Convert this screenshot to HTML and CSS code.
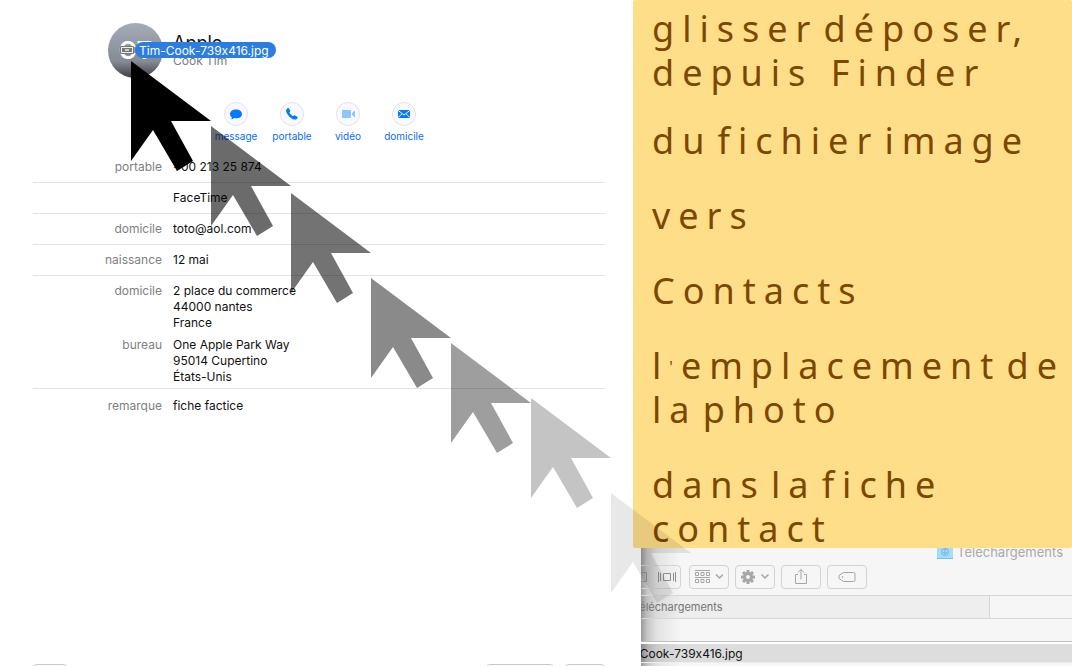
FILE: index.html
```
<!DOCTYPE html>
<html lang="fr">
<head>
    <meta charset="UTF-8">
    <meta name="viewport" content="width=device-width, initial-scale=1.0">
    <title>Contacts</title>
    <link rel="stylesheet" href="styles.css">
</head>
<body>
    <div class="desktop">
        <main class="contacts">
            <header class="card-header">
                <div class="avatar">CT</div>
                <div class="identity">
                    <h1>Apple</h1>
                    <p>Cook Tim</p>
                </div>
            </header>
            <nav class="actions">
                <a href="#message">
                    <svg viewBox="0 0 24 24"><circle cx="12" cy="12" r="11.5"/><path d="M12 7.500c3.500 0 6 1.900 6 4.400s-2.500 4.400-6 4.400c-.7 0-1.300-.1-1.900-.2-.9.800-2 1.200-3 1.200.6-.6.8-1.300.8-2C6.700 14.500 6 13.300 6 11.900c0-2.500 2.500-4.400 6-4.400z"/></svg>
                    message
                </a>
                <a href="#portable">
                    <svg viewBox="0 0 24 24"><circle cx="12" cy="12" r="11.5"/><path d="M7.300 6.400c.5-.5 1.200-.5 1.600.1l1.300 1.900c.3.500.2 1-.2 1.400l-.6.7c.9 1.600 2.100 2.800 3.700 3.700l.8-.7c.4-.3.900-.4 1.300-.1l2 1.400c.6.400.6 1.100.1 1.600-1.100 1.200-2.300 1.600-4.200.8-3-1.300-5.300-3.600-6.600-6.600-.8-1.900-.4-3.100.8-4.200z"/></svg>
                    portable
                </a>
                <a href="#video" class="off">
                    <svg viewBox="0 0 24 24"><circle cx="12" cy="12" r="11.5"/><path d="M6.500 8h7.500q1 0 1 1v6q0 1-1 1H6.500q-.5 0-.5-1V9q0-1 .5-1zM16 11l3-2.500v7L16 13z"/></svg>
                    vidéo
                </a>
                <a href="#domicile">
                    <svg viewBox="0 0 24 24"><circle cx="12" cy="12" r="11.5"/><path d="M6 8h12v8H6z"/><path class="fold" d="M6 8.300l6 4.700 6-4.700M6 15.700l4-4M18 15.700l-4-4"/></svg>
                    domicile
                </a>
            </nav>
            <dl class="fields">
                <div class="row"><dt>portable</dt><dd>+00 213 25 874</dd></div>
                <div class="row"><dt></dt><dd>FaceTime</dd></div>
                <div class="row"><dt>domicile</dt><dd>toto@aol.com</dd></div>
                <div class="row"><dt>naissance</dt><dd>12 mai</dd></div>
                <div class="row address"><dt>domicile</dt><dd>2 place du commerce<br>44000 nantes<br>France</dd></div>
                <div class="row address-end"><dt>bureau</dt><dd>One Apple Park Way<br>95014 Cupertino<br>États-Unis</dd></div>
                <div class="row remark"><dt>remarque</dt><dd>fiche factice</dd></div>
            </dl>
            <footer class="card-footer">
                <button class="add" aria-label="Ajouter"></button>
                <button class="edit" aria-label="Modifier"></button>
                <button class="share" aria-label="Partager"></button>
            </footer>
        </main>

        <aside class="side">
            <section class="note">
                <p>glisser<span class="gap"> </span>déposer,<br>depuis Finder</p>
                <p>du<span class="gap"> </span>fichier<span class="gap"> </span>image</p>
                <p>vers</p>
                <p>Contacts</p>
                <p>l<span class="apostrophe">'</span>emplacement<span class="gap"> </span>de<br>la<span class="gap"> </span>photo</p>
                <p>dans<span class="gap"> </span>la<span class="gap"> </span>fiche<br>contact</p>
            </section>

            <section class="finder">
                <h2 class="finder-title">
                    <svg viewBox="0 0 16 14"><path class="folder" d="M0 0h16v14H0z"/><path class="edge" d="M0 13h16v1H0z"/><circle cx="8" cy="7" r="3.5"/><path class="arrow" d="M8 4v5M6 7l2 2 2-2"/></svg>
                    Téléchargements
                </h2>
                <div class="toolbar">
                    <div class="views">
                        <button class="columns" aria-label="Colonnes"><svg viewBox="0 0 8 12"><path d="M-4 1.500H5.500v9H-4"/></svg></button>
                        <button class="flow" aria-label="Cover Flow"><svg viewBox="0 0 20 12"><path d="M1.500 1v10M3.500 2v8M6.500 2.500h7v7h-7zM16.500 2v8M18.500 1v10"/></svg></button>
                    </div>
                    <button aria-label="Grouper">
                        <svg class="group" viewBox="0 0 28 14"><path d="M0 .5h15M0 7.500h15M.5 2.500h3v3h-3zM6 2.500h3v3H6zM11.500 2.500h3v3h-3zM.5 9.500h3v3h-3zM6 9.500h3v3H6zM11.500 9.500h3v3h-3z"/><path class="chevron" d="M21 4.500l3.500 3.500L28 4.500"/></svg>
                    </button>
                    <button aria-label="Actions">
                        <svg class="group" viewBox="0 0 28 14"><circle class="gear" cx="7" cy="7" r="3.500"/><path class="teeth" d="M7 0v3M7 11v3M0 7h3M11 7h3M2.050 2.050l2.100 2.100M9.850 9.850l2.100 2.100M2.050 11.950l2.100-2.100M9.850 4.150l2.100-2.100"/><path class="chevron" d="M20.500 4.500L24 8l3.500-3.500"/></svg>
                    </button>
                    <button aria-label="Partager">
                        <svg class="icon" viewBox="0 0 18 18"><path d="M6 6.500H3.500v9h11v-9H12M9 11.500v-10M6 4.500l3-3 3 3"/></svg>
                    </button>
                    <button aria-label="Tags">
                        <svg class="icon" viewBox="0 0 18 18"><path d="M5.500 4.500h10q1.500 0 1.500 1.500v6q0 1.500-1.500 1.500h-10L1 10.500v-3z"/><circle cx="4.500" cy="9" r=".5"/></svg>
                    </button>
                </div>
                <div class="tabs">
                    <a href="#telechargements" class="tab">Téléchargements</a>
                </div>
                <div class="list-head"></div>
                <div class="file"><span>Tim-Cook-739x416.jpg</span></div>
            </section>
        </aside>

        <div class="drag-label">
            <svg viewBox="0 0 14 10"><path class="frame" d="M.5 1.500h13v7H.5z"/><path class="photo" d="M2 3h10v4H2z"/><path class="face" d="M5 4h4v2H5z"/></svg>
            <span>Tim-Cook-739x416.jpg</span>
        </div>

        <svg class="trail" width="700" height="666" viewBox="0 0 700 666">
            <defs>
                <path id="arrow" d="M0 0l80 60H40l22 40-16 10-24-41L0 100z"/>
            </defs>
            <use href="#arrow" x="131" y="61"/>
            <use href="#arrow" x="211" y="126" opacity=".58"/>
            <use href="#arrow" x="291" y="193" opacity=".55"/>
            <use href="#arrow" x="371" y="278" opacity=".46"/>
            <use href="#arrow" x="451" y="343" opacity=".38"/>
            <use href="#arrow" x="531" y="398" opacity=".23"/>
            <use href="#arrow" x="611" y="493" opacity=".09"/>
        </svg>
    </div>
</body>
</html>
```
FILE: styles.css
```
* {
    margin: 0;
    padding: 0;
    box-sizing: border-box;
}
body {
    font-family: Inter, "Liberation Sans", sans-serif;
    font-size: 12px;
    line-height: 16px;
    font-variant-ligatures: no-contextual;
    color: #111;
    background-color: #fff;
}
a {
    text-decoration: none;
}
.desktop {
    position: relative;
    display: flex;
    min-height: 100vh;
    overflow: hidden;
}

/* contact card */
.contacts {
    flex: 1;
    display: flex;
    flex-direction: column;
    padding: 23px 36px 0 33px;
    background-color: #fff;
}
.card-header {
    display: flex;
    align-items: center;
    gap: 10px;
    padding-left: 75px;
}
.avatar {
    width: 55px;
    height: 55px;
    border-radius: 50%;
    background: linear-gradient(#a5abb8 0%, #868a94 70%, #3c3d42 100%);
    color: #fff;
    font-size: 24px;
    font-weight: 600;
    line-height: 55px;
    text-align: center;
}
.identity h1 {
    font-size: 18px;
    font-weight: 400;
    line-height: 20px;
}
.identity p {
    color: #7c7c7c;
}
.actions {
    display: flex;
    padding: 24px 0 0 175px;
}
.actions a {
    width: 56px;
    display: flex;
    flex-direction: column;
    align-items: center;
    gap: 2px;
    font-size: 10px;
    color: #0a6cff;
}
.actions svg {
    width: 24px;
    height: 24px;
    fill: #007aff;
}
.actions circle {
    fill: #f9f9ff;
    stroke: #e2e2ea;
}
.actions .fold {
    fill: none;
    stroke: #f9f9ff;
}
.actions .off svg {
    fill: #8cc6ff;
}
.fields {
    padding-top: 8px;
}
.row {
    display: grid;
    grid-template-columns: 129px 1fr;
    column-gap: 11px;
    padding: 7px 0;
    border-bottom: 1px solid #e3e3e3;
}
.row dt {
    color: #808080;
    text-align: right;
}
.row.address {
    padding-bottom: 6px;
    border-bottom: 0;
}
.row.address-end {
    padding: 0 0 3px;
}
.row.remark {
    padding-top: 9px;
    border-bottom: 0;
}
.card-footer {
    display: flex;
    height: 2px;
    margin-top: auto;
    overflow: hidden;
}
.card-footer button {
    height: 22px;
    border: 1px solid #c8c8c8;
    border-radius: 4px;
    background-color: #fff;
}
.card-footer .add {
    width: 34px;
    margin-right: auto;
}
.card-footer .edit {
    width: 68px;
    margin-right: 11px;
}
.card-footer .share {
    width: 40px;
}

/* right side */
.side {
    width: 431px;
    display: flex;
    flex-direction: column;
}
.note {
    position: relative;
    z-index: 1;
    display: flex;
    flex-direction: column;
    gap: 31px;
    margin-left: -8px;
    padding: 7px 0 0 19px;
    border-radius: 2px;
    background-color: #ffde89;
    font-family: "Noto Sans", sans-serif;
    font-size: 36px;
    line-height: 44px;
    letter-spacing: 8px;
    white-space: nowrap;
    color: #7c4700;
}
.note p:first-child {
    margin-bottom: -7px;
}
.note p:last-child {
    margin-bottom: -3px;
}
.note .gap {
    font-size: 20px;
    line-height: 0;
    letter-spacing: 0;
}
.note .apostrophe {
    font-size: 16px;
    line-height: 0;
    vertical-align: 6px;
}
.finder {
    flex: 1;
    margin-top: -4px;
    overflow: hidden;
    background: linear-gradient(to right, rgba(0, 0, 0, 0.38), rgba(0, 0, 0, 0.2) 6px, rgba(0, 0, 0, 0.08) 16px, rgba(0, 0, 0, 0) 40px), #f6f6f6;
}
.finder-title {
    display: flex;
    align-items: center;
    justify-content: flex-end;
    gap: 4px;
    padding-right: 9px;
    font-size: 13px;
    font-weight: 400;
    color: #a9a9a9;
}
.finder-title svg {
    width: 16px;
    height: 14px;
    fill: none;
    stroke: #69b5e0;
}
.finder-title .folder {
    fill: #a5dcf8;
    stroke: none;
}
.finder-title .edge {
    fill: #7cc0e8;
    stroke: none;
}
.toolbar {
    display: flex;
    gap: 6px;
    padding: 5px 0 6px;
}
.toolbar button {
    width: 40px;
    height: 24px;
    display: flex;
    align-items: center;
    justify-content: center;
    border: 1px solid #d2d2d2;
    border-radius: 4px;
    background-color: transparent;
}
.toolbar svg {
    flex-shrink: 0;
    fill: none;
    stroke: #a6a6a6;
}
.views {
    display: flex;
    margin-right: 2px;
}
.toolbar .columns {
    width: 11px;
    justify-content: flex-start;
    border-width: 1px 0;
    border-radius: 0;
}
.toolbar .flow {
    width: 29px;
    border-radius: 0 4px 4px 0;
}
.toolbar .views svg {
    stroke: #909090;
}
.columns svg {
    width: 8px;
    height: 12px;
}
.flow svg {
    width: 20px;
    height: 12px;
}
.group {
    width: 28px;
    height: 14px;
}
.icon {
    width: 18px;
    height: 18px;
}
.toolbar .chevron {
    stroke-width: 1.5;
}
.toolbar .gear,
.toolbar .teeth {
    stroke-width: 3;
}
.tabs {
    height: 24px;
    border: 1px solid #d6d6d6;
    border-width: 1px 0;
}
.tab {
    display: block;
    width: 349px;
    height: 22px;
    border-right: 1px solid #d6d6d6;
    background-color: rgba(0, 0, 0, 0.03);
    font-size: 11px;
    line-height: 22px;
    text-indent: -8px;
    color: #747474;
}
.list-head {
    height: 23px;
    border-bottom: 1px solid #bdbdbd;
}
.file {
    display: flex;
    height: 21px;
    border-top: 2px solid #fff;
    border-bottom: 1px solid #eee;
    background-color: rgba(0, 0, 0, 0.1);
    line-height: 20px;
}
.file span {
    margin-left: -28px;
}

/* dragged file and its trail */
.drag-label {
    position: absolute;
    left: 120px;
    top: 42px;
    display: flex;
    align-items: center;
    gap: 1px;
}
.drag-label svg {
    width: 14px;
    height: 10px;
}
.drag-label .frame {
    fill: #eee;
    stroke: #777;
}
.drag-label .photo {
    fill: #777;
}
.drag-label .face {
    fill: #ccc;
}
.drag-label span {
    height: 16px;
    padding: 0 7px 0 4px;
    border-radius: 8px;
    background-color: #2b7de0;
    line-height: 18px;
    color: #fff;
}
.trail {
    position: absolute;
    left: 0;
    top: 0;
    z-index: 2;
    pointer-events: none;
}
```
